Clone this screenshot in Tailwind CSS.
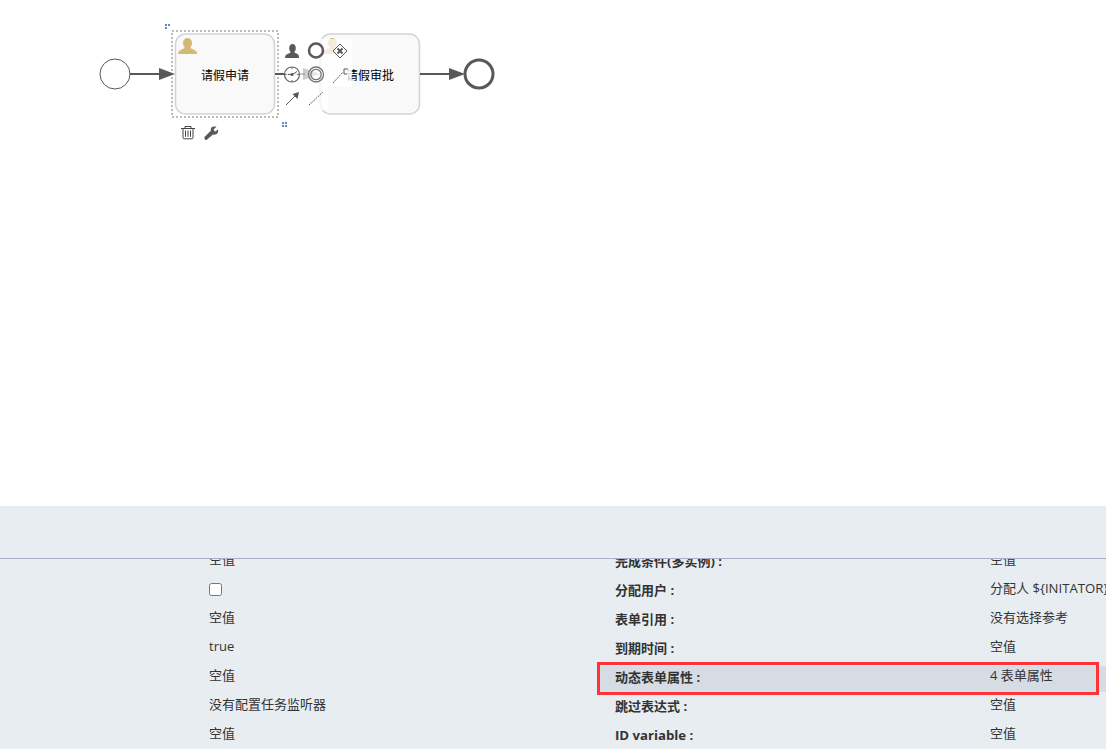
<!DOCTYPE html>
<html lang="zh">
<head>
<meta charset="utf-8">
<title>流程设计器</title>
<script src="https://cdn.jsdelivr.net/npm/@tailwindcss/browser@4"></script>
</head>
<body class="bg-white overflow-hidden font-['Open_Sans','Noto_Sans_CJK_SC',sans-serif]">
<div class="relative w-[1106px] h-[749px] flex flex-col overflow-hidden">
  <div class="h-[506px] shrink-0 bg-white">
    <svg width="1106" height="506" viewBox="0 0 1106 506" class="block">
      <!-- start -->
      <circle cx="115" cy="74" r="15" fill="#fff" stroke="#585858" stroke-width="1"/>
      <!-- task 1 -->
      <rect x="175.500" y="34" width="99" height="80" rx="10" fill="#f9f9f9" stroke="#d4d4d4" stroke-width="1.500"/>
      <rect x="172" y="31" width="106" height="86" fill="none" stroke="#bbb" stroke-width="2" stroke-dasharray="2 2"/>
      <path d="M130 74H161" stroke="#585858" stroke-width="2"/>
      <path d="M159 68L175 74L159 80Z" fill="#585858"/>
      <g fill="#5b8ac4"><rect x="165" y="24" width="2" height="2"/><rect x="168" y="24" width="2" height="2"/><rect x="165" y="27" width="2" height="2"/><rect x="282" y="122" width="2" height="2"/><rect x="285" y="122" width="2" height="2"/><rect x="282" y="125" width="2" height="2"/><rect x="285" y="125" width="2" height="2"/></g>
      <path d="M178 54c0-3 2-4 5-5 1-.5 1.500-1 1.500-2-1-1-1.500-2.500-1.500-4 0-3 1.700-5 4.500-5s4.500 2 4.500 5c0 1.500-.5 3-1.500 4 0 1 .5 1.500 1.500 2 3 1 5 2 5 5Z" fill="#d4b876"/>
      <text x="225" y="80" text-anchor="middle" font-size="12" fill="#000">请假申请</text>
      <!-- task 2 -->
      <rect x="320.500" y="34" width="99" height="80" rx="10" fill="#f9f9f9" stroke="#d4d4d4" stroke-width="1.500"/>
      <path d="M323 54c0-3 2-4 5-5 1-.5 1.500-1 1.500-2-1-1-1.500-2.500-1.500-4 0-3 1.700-5 4.500-5s4.500 2 4.500 5c0 1.500-.5 3-1.500 4 0 1 .5 1.500 1.500 2 3 1 5 2 5 5Z" fill="#d4b876"/>
      <text x="370" y="80" text-anchor="middle" font-size="12" fill="#000">请假审批</text>
      <!-- flow 1 -->
      <path d="M275 74H284" stroke="#585858" stroke-width="2"/>
      <path d="M284 74H305" stroke="#585858" stroke-width="2" opacity=".3"/>
      <path d="M303 68L320 74L303 80Z" fill="#585858" opacity=".3"/>
      <!-- flow 2, end -->
      <path d="M420 74H451" stroke="#585858" stroke-width="2"/>
      <path d="M449 68L465 74L449 80Z" fill="#585858"/>
      <circle cx="479" cy="74" r="14" fill="#fff" stroke="#585858" stroke-width="3"/>
      <!-- context pad wash -->
      <path d="M320 39H352V87H328V110H320Z" fill="#fff" opacity=".75"/>
      <!-- pad icons -->
      <path d="M285 58c0-3 1.700-3.800 4.300-4.700.8-.3 1.200-.8 1.200-1.500-.8-.9-1.300-2.200-1.300-3.500 0-2.600 1.200-4.300 3.300-4.300s3.300 1.700 3.300 4.300c0 1.300-.5 2.600-1.300 3.500 0 .7.4 1.200 1.200 1.500 2.600.9 3.300 1.700 3.300 4.700Z" fill="#585858"/>
      <circle cx="316" cy="50.500" r="7" fill="#fff" stroke="#585858" stroke-width="2.500"/>
      <path d="M340 44L347 51L340 58L333 51Z" fill="#fff" stroke="#585858" stroke-width="1"/>
      <path d="M337.500 48.500L342.500 53.500M342.500 48.500L337.500 53.500" stroke="#585858" stroke-width="2"/>
      <circle cx="292" cy="74.500" r="7.500" fill="#fff" fill-opacity=".6" stroke="#666" stroke-width="1.200"/>
      <path d="M292 67V69M292 80V82M284.500 74.500H286.500M297.500 74.500H299.500M292 74.500L297 71.500M288 74.500H292" stroke="#666" stroke-width="1"/>
      <circle cx="292" cy="74.500" r="1.500" fill="#585858"/>
      <circle cx="316" cy="74.500" r="7.500" fill="#fff" fill-opacity=".5" stroke="#777" stroke-width="1.300"/>
      <circle cx="316" cy="74.500" r="5.200" fill="none" stroke="#777" stroke-width="1.300"/>
      <path d="M333 83L343 72" stroke="#585858" stroke-width="1" stroke-dasharray="2 1"/>
      <path d="M348 69H344V74H347" fill="#fff" stroke="#585858" stroke-width="1"/>
      <path d="M286 105L295 96" stroke="#585858" stroke-width="1"/>
      <path d="M299 92L297.500 99L292.500 94Z" fill="#585858"/>
      <path d="M309 105L323 92" stroke="#585858" stroke-width="1" stroke-dasharray="2 1"/>
      <!-- trash -->
      <g fill="none" stroke="#444" stroke-width="1">
        <path d="M181 128.500H195M185 128.500V126.500H191V128.500M183 128.500V137.500Q183 138.800 184.200 138.800H191.800Q193 138.800 193 137.500V128.500M185.500 130.500V136.800M188 130.500V136.800M190.500 130.500V136.800"/>
      </g>
      <!-- wrench -->
      <path d="M204.500 137L211 130.500C210 127.500 213 125.800 216.500 126.800L213.500 129.500L215 131.800L218 129.500C219 133 216 135.500 213 134.500L206.500 140C205.500 140.500 204 139 204.500 137Z" fill="#585858"/>
    </svg>
  </div>

  <div class="flex-1 min-h-0 flex flex-col bg-[#e8edf1] text-[13px] leading-[18px] text-[#333]">
    <div class="h-[52px] shrink-0 border-b border-[#a8aec4] box-content"></div>
    <div class="flex-1 min-h-0 overflow-hidden">
      <div class="-mt-[9px] flex flex-col gap-[3px]">
        <div class="flex h-[26px]"><div class="w-[600px] pl-[209px]">空值</div><div class="flex-1 flex pl-[15px]"><span class="w-[375px] font-bold shrink-0 pt-[2px]">完成条件(多实例) :</span><span>空值</span></div></div>
        <div class="flex h-[26px]"><div class="w-[600px] pl-[209px] flex items-start"><input type="checkbox" class="w-[13px] h-[13px] mt-[4px]"></div><div class="flex-1 flex pl-[15px] whitespace-nowrap overflow-hidden"><span class="w-[375px] font-bold shrink-0 pt-[2px]">分配用户 :</span><span>分配人 <span class="text-[13.200px]">${INITATOR}</span></span></div></div>
        <div class="flex h-[26px]"><div class="w-[600px] pl-[209px]">空值</div><div class="flex-1 flex pl-[15px]"><span class="w-[375px] font-bold shrink-0 pt-[2px]">表单引用 :</span><span>没有选择参考</span></div></div>
        <div class="flex h-[26px]"><div class="w-[600px] pl-[209px]">true</div><div class="flex-1 flex pl-[15px]"><span class="w-[375px] font-bold shrink-0 pt-[2px]">到期时间 :</span><span>空值</span></div></div>
        <div class="flex h-[26px]"><div class="w-[600px] pl-[209px]">空值</div><div class="flex-1 flex pl-[15px] bg-[#d5dce4]"><span class="w-[375px] font-bold shrink-0 pt-[2px]">动态表单属性 :</span><span>4 表单属性</span></div></div>
        <div class="flex h-[26px]"><div class="w-[600px] pl-[209px]">没有配置任务监听器</div><div class="flex-1 flex pl-[15px]"><span class="w-[375px] font-bold shrink-0 pt-[2px]">跳过表达式 :</span><span>空值</span></div></div>
        <div class="flex h-[26px]"><div class="w-[600px] pl-[209px]">空值</div><div class="flex-1 flex pl-[15px]"><span class="w-[375px] font-bold shrink-0 pt-[2px] text-[13.200px]">ID variable :</span><span>空值</span></div></div>
      </div>
    </div>
  </div>
  <div class="absolute left-[597px] top-[662px] w-[502px] h-[33px] border-[3px] border-[#ff3338]"></div>
</div>
</body>
</html>
